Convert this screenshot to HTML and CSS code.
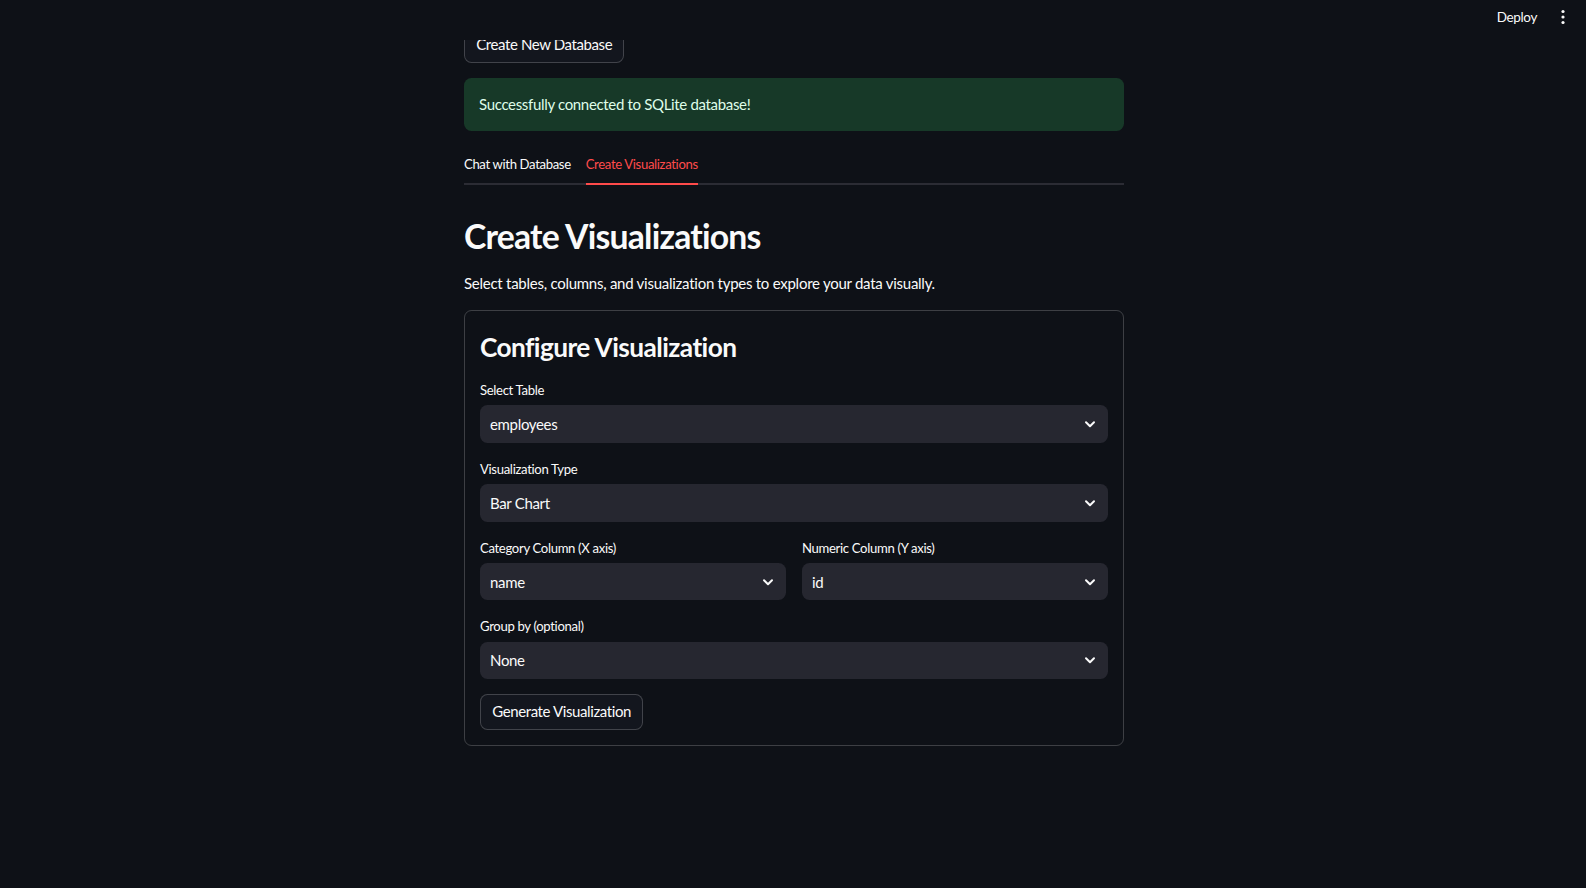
FILE: index.html
```html
<!DOCTYPE html>
<html lang="en">
<head>
<meta charset="utf-8">
<title>SQLite Chat</title>
<link rel="stylesheet" href="styles.css">
</head>
<body>
<header class="app-header">
  <span class="deploy">Deploy</span>
  <span class="kebab">
    <svg width="16" height="20" viewBox="0 0 16 20"><circle cx="8" cy="4.5" r="1.6" fill="#fafafa"/><circle cx="8" cy="10" r="1.6" fill="#fafafa"/><circle cx="8" cy="15.5" r="1.6" fill="#fafafa"/></svg>
  </span>
</header>
<main class="main">
  <div class="block">
    <button class="btn">Create New Database</button>
    <div class="alert">Successfully connected to SQLite database!</div>
    <div class="tabs">
      <div class="tab-list">
        <button class="tab">Chat with Database</button>
        <button class="tab active">Create Visualizations</button>
      </div>
      <div class="panel">
        <h2 class="h2">Create Visualizations</h2>
        <p class="text">Select tables, columns, and visualization types to explore your data visually.</p>
        <div class="card">
          <h3 class="h3">Configure Visualization</h3>
          <div class="field">
            <label class="label">Select Table</label>
            <div class="select"><span>employees</span><svg class="chev" width="14" height="14" viewBox="0 0 14 14"><path d="M3 5.2l4 4 4-4" fill="none" stroke="#fafafa" stroke-width="2" stroke-linecap="round" stroke-linejoin="round"/></svg></div>
          </div>
          <div class="field">
            <label class="label">Visualization Type</label>
            <div class="select"><span>Bar Chart</span><svg class="chev" width="14" height="14" viewBox="0 0 14 14"><path d="M3 5.2l4 4 4-4" fill="none" stroke="#fafafa" stroke-width="2" stroke-linecap="round" stroke-linejoin="round"/></svg></div>
          </div>
          <div class="cols">
            <div class="field">
              <label class="label">Category Column (X axis)</label>
              <div class="select"><span>name</span><svg class="chev" width="14" height="14" viewBox="0 0 14 14"><path d="M3 5.2l4 4 4-4" fill="none" stroke="#fafafa" stroke-width="2" stroke-linecap="round" stroke-linejoin="round"/></svg></div>
            </div>
            <div class="field">
              <label class="label">Numeric Column (Y axis)</label>
              <div class="select"><span>id</span><svg class="chev" width="14" height="14" viewBox="0 0 14 14"><path d="M3 5.2l4 4 4-4" fill="none" stroke="#fafafa" stroke-width="2" stroke-linecap="round" stroke-linejoin="round"/></svg></div>
            </div>
          </div>
          <div class="field">
            <label class="label">Group by (optional)</label>
            <div class="select"><span>None</span><svg class="chev" width="14" height="14" viewBox="0 0 14 14"><path d="M3 5.2l4 4 4-4" fill="none" stroke="#fafafa" stroke-width="2" stroke-linecap="round" stroke-linejoin="round"/></svg></div>
          </div>
          <button class="btn">Generate Visualization</button>
        </div>
      </div>
    </div>
  </div>
</main>
</body>
</html>
```

FILE: styles.css
```css
* { box-sizing: border-box; }

html, body {
  margin: 0;
  background: #0e1117;
}

body {
  color: #fafafa;
  font-family: Lato, "Source Sans Pro", "Noto Sans", sans-serif;
  font-size: 15px;
  line-height: 1.6;
  letter-spacing: -0.33px;
  min-height: 888px;
}

.app-header {
  position: fixed;
  top: 0;
  left: 0;
  right: 0;
  height: 40px;
  background: #0e1117;
  display: flex;
  justify-content: flex-end;
  align-items: flex-start;
  padding: 7px 15px 0 0;
  gap: 18px;
  z-index: 10;
}

.deploy {
  font-size: 13.5px;
  line-height: 20px;
  letter-spacing: -0.35px;
  color: #fafafa;
}

.kebab {
  display: flex;
  width: 16px;
  height: 20px;
}

.main {
  display: flex;
  justify-content: center;
  padding: 27px 0 60px 2px;
}

.block {
  width: 660px;
  display: flex;
  flex-direction: column;
  gap: 15px;
}

.btn {
  align-self: flex-start;
  height: 36px;
  padding: 0 11.25px 2px;
  background: #13161e;
  border: 1px solid rgba(250, 250, 250, 0.2);
  border-radius: 7.5px;
  color: #fafafa;
  font-family: inherit;
  font-size: 15px;
  line-height: 22px;
  letter-spacing: -0.4px;
}

.alert {
  background: #173928;
  color: #dffde9;
  border-radius: 7.5px;
  padding: 15px;
  line-height: 22.5px;
}

.tabs {
  display: flex;
  flex-direction: column;
}

.tab-list {
  display: flex;
  gap: 15px;
  border-bottom: 2px solid #2b2c34;
}

.tab {
  height: 39.5px;
  margin-bottom: -2px;
  padding: 0;
  background: none;
  border: none;
  border-bottom: 2px solid transparent;
  color: #fafafa;
  font-family: inherit;
  font-size: 13.125px;
  line-height: 20px;
  letter-spacing: -0.35px;
}

.tab.active {
  color: #ff4b4b;
  border-bottom-color: #ff4b4b;
}

.panel {
  padding-top: 15px;
  display: flex;
  flex-direction: column;
  gap: 15px;
}

.h2 {
  margin: 0;
  padding: 15.75px 0 0;
  font-size: 33.75px;
  line-height: 40.5px;
  font-weight: 700;
  letter-spacing: -0.8px;
}

.text {
  margin: 0;
  line-height: 24px;
  letter-spacing: -0.26px;
}

.card {
  border: 1px solid rgba(250, 250, 250, 0.2);
  border-radius: 7.5px;
  padding: 15px;
  display: flex;
  flex-direction: column;
  gap: 15px;
}

.h3 {
  margin: 0;
  padding: 5.5px 0 0.85px;
  font-size: 26.25px;
  line-height: 31.5px;
  font-weight: 700;
  letter-spacing: -0.57px;
}

.field {
  display: flex;
  flex-direction: column;
  min-width: 0;
}

.label {
  min-height: 22.5px;
  margin-bottom: 3.75px;
  font-size: 13.125px;
  line-height: 22px;
  letter-spacing: -0.33px;
}

.select {
  height: 37.5px;
  background: #262730;
  border-radius: 7.5px;
  display: flex;
  align-items: center;
  justify-content: space-between;
  padding: 0 11px 0 10px;
  font-size: 15px;
}

.chev {
  flex: none;
}

.cols {
  display: grid;
  grid-template-columns: 1fr 1fr;
  gap: 16px;
}
```
